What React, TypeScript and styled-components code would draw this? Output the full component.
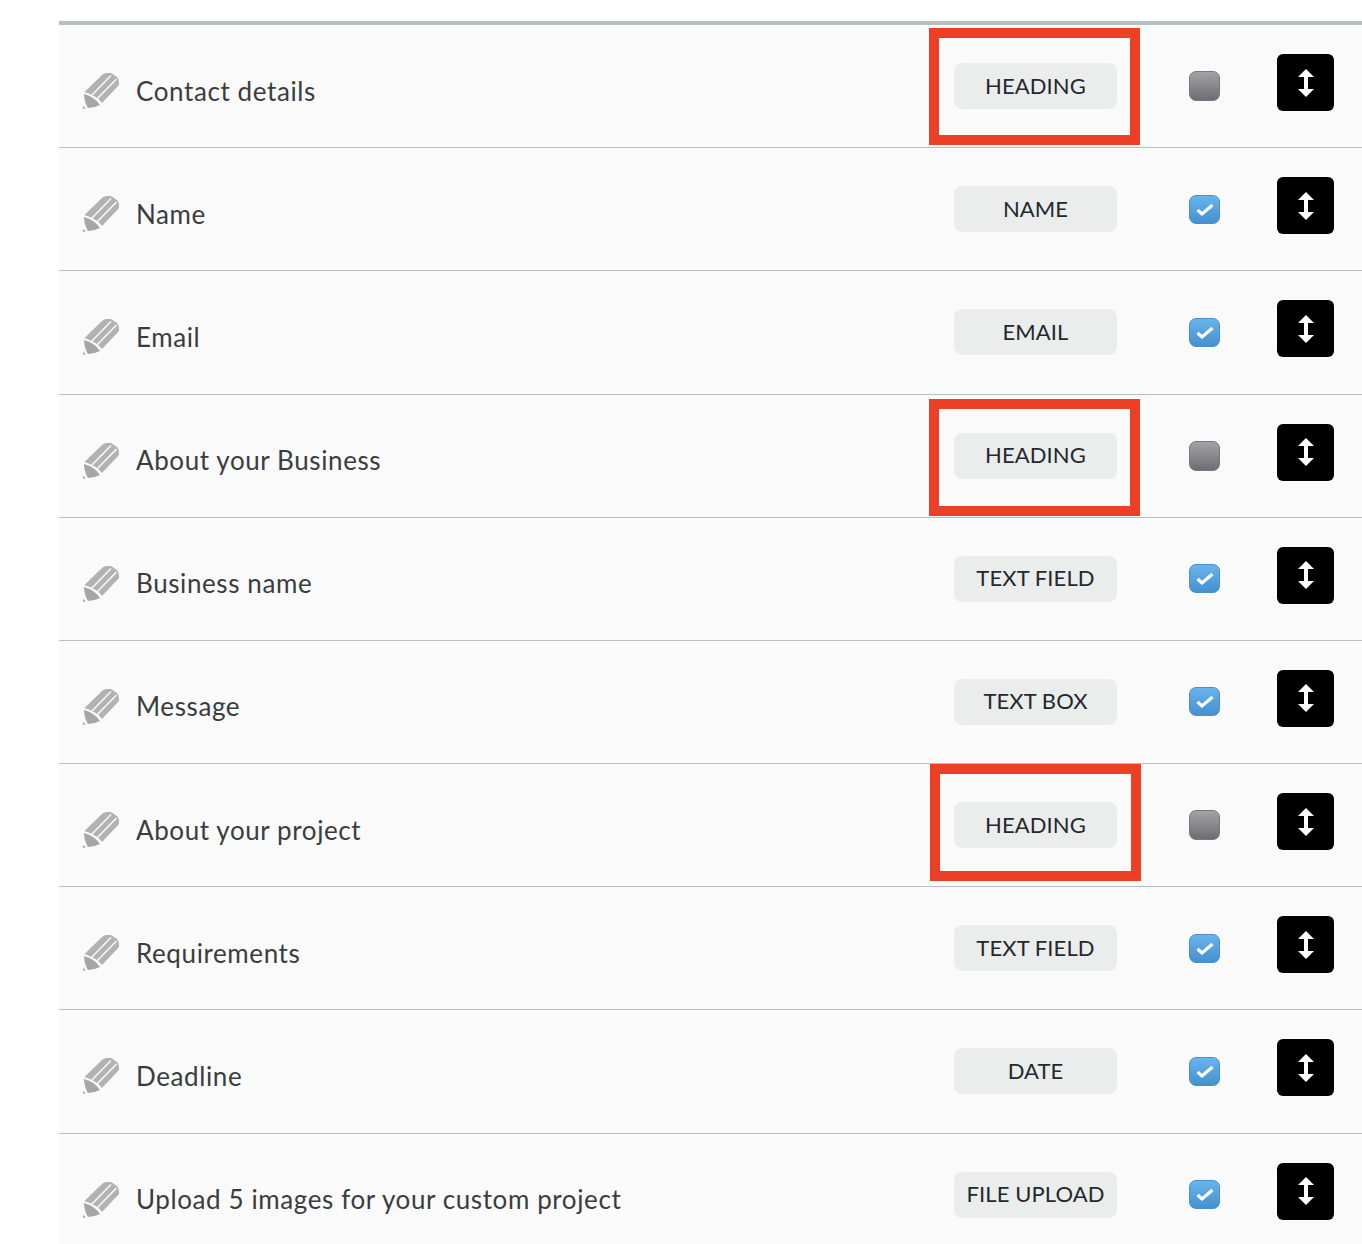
import React from 'react'
import styled, { createGlobalStyle } from 'styled-components'

const GlobalStyle = createGlobalStyle`
    html, body {
        margin: 0;
        height: 1244px;
        overflow: hidden;
        background-color: #fff;
        font-family: 'Lato', 'Liberation Sans', sans-serif;
    }
`
const FieldTable = styled.div`
    margin: 21px 0 0 59px;
    border-top: 4px solid #b5c0bf;
`
const Row = styled.div`
    display: grid;
    grid-template-columns: 53px 1fr 163px 103px 114px;
    align-items: center;
    box-sizing: border-box;
    height: 123.18px;
    padding: 0 28px 0 24px;
    background-color: #fafafa;
    border-bottom: 1px solid #b5c0bf;
`
const PencilIcon = styled.svg`
    display: block;
    width: 36px;
    height: 36px;
    margin-top: 10px;
`
const Label = styled.span`
    margin-top: 9px;
    font-size: 26px;
    letter-spacing: 0.6px;
    color: #3a3d3f;
`
const TypeCell = styled.div`
    position: relative;
`
const TypePill = styled.div`
    display: flex;
    align-items: center;
    justify-content: center;
    box-sizing: border-box;
    height: 46px;
    padding-bottom: 2px;
    border-radius: 8px;
    background-color: #ebeded;
    font-size: 22px;
    letter-spacing: 0.1px;
    color: #23292e;
    white-space: nowrap;
`
const Highlight = styled.div<{ $top: number; $left: number }>`
    position: absolute;
    top: ${props => props.$top}px;
    left: ${props => props.$left}px;
    width: 211px;
    height: 117px;
    box-sizing: border-box;
    border: 10px solid #ec4026;
`
const CheckBox = styled.div<{ $checked: boolean }>`
    display: flex;
    align-items: center;
    justify-content: center;
    box-sizing: border-box;
    height: ${props => (props.$checked ? 29 : 30)}px;
    margin-left: 72px;
    border-radius: 7px;
    border: 1px solid ${props => (props.$checked ? '#4a90cf' : '#77777c')};
    background: ${props => props.$checked
        ? 'linear-gradient(#68b4ec, #4590cf)'
        : 'linear-gradient(#a3a3a7, #6c6c72)'};
`
const Handle = styled.div`
    display: flex;
    align-items: center;
    justify-content: center;
    height: 57px;
    margin: -7px 0 0 57px;
    border-radius: 6px;
    background-color: #000;
`

const fields = [
    { label: 'Contact details', type: 'HEADING', checked: false, box: { top: -35, left: -25 } },
    { label: 'Name', type: 'NAME', checked: true },
    { label: 'Email', type: 'EMAIL', checked: true },
    { label: 'About your Business', type: 'HEADING', checked: false, box: { top: -34, left: -25 } },
    { label: 'Business name', type: 'TEXT FIELD', checked: true },
    { label: 'Message', type: 'TEXT BOX', checked: true },
    { label: 'About your project', type: 'HEADING', checked: false, box: { top: -38, left: -24 } },
    { label: 'Requirements', type: 'TEXT FIELD', checked: true },
    { label: 'Deadline', type: 'DATE', checked: true },
    { label: 'Upload 5 images for your custom project', type: 'FILE UPLOAD', checked: true },
]

const Pencil = () => (
    <PencilIcon viewBox="0 0 36 36">
        <path d="M1.5 19 L19 2 Q21 0 24 0 L28 0 L34 4 Q36 6 36 9 L36 12 L19 30 Q14 23 1.5 19 Z" fill="#b2b2b2" />
        <path d="M0.8 21 Q12 24 17 32 Q11 35 5 35 Q2 31 0.8 21 Z" fill="#a6a6a6" />
        <path d="M0 35.5 L0.6 33 L2.5 35.5 Z" fill="#8c8c8c" />
        <path d="M8.5 22.5 L28 2.5 M13.5 26.5 L33.5 6" stroke="#fafafa" strokeWidth="1.5" fill="none" />
    </PencilIcon>
)

const MoveArrow = () => (
    <svg width="16" height="28" viewBox="0 0 16 28">
        <path d="M8 0 L16 8 L10 8 L10 20 L16 20 L8 28 L0 20 L6 20 L6 8 L0 8 Z" fill="#fff" />
    </svg>
)

const Tick = () => (
    <svg width="20" height="15" viewBox="0 0 20 15">
        <path d="M2.5 8 L7 12 L17.5 3" stroke="#fff" strokeWidth="3.2" fill="none" />
    </svg>
)

const App = () => {
    return (
        <>
            <GlobalStyle />
            <FieldTable>
                {fields.map(f => (
                    <Row key={f.label}>
                        <Pencil />
                        <Label>{f.label}</Label>
                        <TypeCell>
                            <TypePill>{f.type}</TypePill>
                            {f.box && <Highlight $top={f.box.top} $left={f.box.left} />}
                        </TypeCell>
                        <CheckBox $checked={f.checked}>{f.checked && <Tick />}</CheckBox>
                        <Handle><MoveArrow /></Handle>
                    </Row>
                ))}
            </FieldTable>
        </>
    )
}

export default App
